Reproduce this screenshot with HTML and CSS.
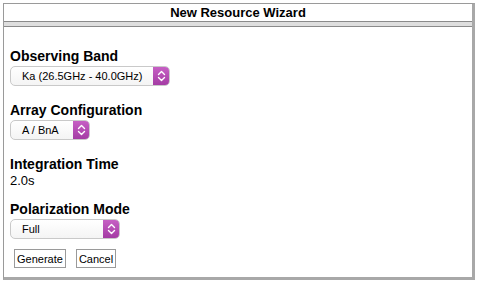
FILE: index.html
```html
<!DOCTYPE html>
<html lang="en">
<head>
    <meta charset="UTF-8">
    <meta name="viewport" content="width=device-width, initial-scale=1.0">
    <title>New Resource Wizard</title>
    <link rel="stylesheet" href="styles.css">
</head>
<body>

    <div class="wizard">
        <div class="wizard-title">New Resource Wizard</div>
        <div class="wizard-band"></div>

        <div class="wizard-body">
            <div class="field">
                <div class="field-label">Observing Band</div>
                <div class="select select-band">
                    <span class="select-value">Ka (26.5GHz - 40.0GHz)</span>
                    <span class="stepper">
                        <svg width="9" height="12" viewBox="0 0 9 12"><path d="M1.5 4.5 L4.5 1.5 L7.5 4.5 M1.5 7.5 L4.5 10.5 L7.5 7.5" fill="none" stroke="#fff" stroke-width="1.4" stroke-linecap="round" stroke-linejoin="round"/></svg>
                    </span>
                </div>
            </div>

            <div class="field">
                <div class="field-label">Array Configuration</div>
                <div class="select select-array">
                    <span class="select-value">A / BnA</span>
                    <span class="stepper">
                        <svg width="9" height="12" viewBox="0 0 9 12"><path d="M1.5 4.5 L4.5 1.5 L7.5 4.5 M1.5 7.5 L4.5 10.5 L7.5 7.5" fill="none" stroke="#fff" stroke-width="1.4" stroke-linecap="round" stroke-linejoin="round"/></svg>
                    </span>
                </div>
            </div>

            <div class="field">
                <div class="field-label">Integration Time</div>
                <div class="field-value">2.0s</div>
            </div>

            <div class="field">
                <div class="field-label">Polarization Mode</div>
                <div class="select select-pol">
                    <span class="select-value">Full</span>
                    <span class="stepper">
                        <svg width="9" height="12" viewBox="0 0 9 12"><path d="M1.5 4.5 L4.5 1.5 L7.5 4.5 M1.5 7.5 L4.5 10.5 L7.5 7.5" fill="none" stroke="#fff" stroke-width="1.4" stroke-linecap="round" stroke-linejoin="round"/></svg>
                    </span>
                </div>
            </div>

            <div class="buttons">
                <button type="button">Generate</button>
                <button type="button">Cancel</button>
            </div>
        </div>
    </div>

</body>
</html>
```

FILE: styles.css
```css
body {
    font-family: "Liberation Sans", Arial, sans-serif;
    margin: 0;
    background: #fff;
    color: #000;
}

.wizard {
    margin: 3px 0 0 3px;
    width: 468px;
    height: 273px;
    border: 1px solid #9a9a9a;
    border-right: 3px solid #a8a8a8;
    border-bottom: 3px solid #a8a8a8;
}

.wizard-title {
    height: 17px;
    line-height: 17px;
    text-align: center;
    font-size: 13px;
    font-weight: bold;
}

.wizard-band {
    height: 4px;
    background-color: #dedede;
    border-top: 1px solid #8a8a8a;
    border-bottom: 1px solid #8a8a8a;
}

.wizard-body {
    padding: 21px 0 0 6px;
}

.field {
    margin-bottom: 16px;
}

.field-label {
    font-size: 14px;
    font-weight: bold;
    line-height: 16px;
}

.field-value {
    font-size: 13px;
    line-height: 16px;
    margin-top: 1px;
    margin-bottom: -4px;
}

.select {
    display: flex;
    align-items: stretch;
    height: 20px;
    margin-top: 2px;
    box-sizing: border-box;
    border: 1px solid #c9c9c9;
    border-radius: 5px;
    background: linear-gradient(#ffffff, #f4f4f4);
    overflow: hidden;
}

.select-band {
    width: 160px;
}

.select-array {
    width: 80px;
}

.select-pol {
    width: 110px;
}

.select-value {
    flex: 1;
    min-width: 0;
    white-space: nowrap;
    font-size: 11px;
    line-height: 18px;
    padding-left: 11px;
}

.stepper {
    flex: none;
    width: 17px;
    display: flex;
    align-items: center;
    justify-content: center;
    background: linear-gradient(#c861c6, #a23aa2);
    margin: -1px -1px -1px 0;
}

.buttons {
    display: flex;
    gap: 10px;
    margin-top: -6px;
    padding-left: 4px;
}

button {
    font-family: "Liberation Sans", Arial, sans-serif;
    font-size: 11px;
    height: 19px;
    padding: 0 2px;
    background-color: #fff;
    border: 1px solid #9a9a9a;
    border-radius: 0;
    color: #000;
}
```
